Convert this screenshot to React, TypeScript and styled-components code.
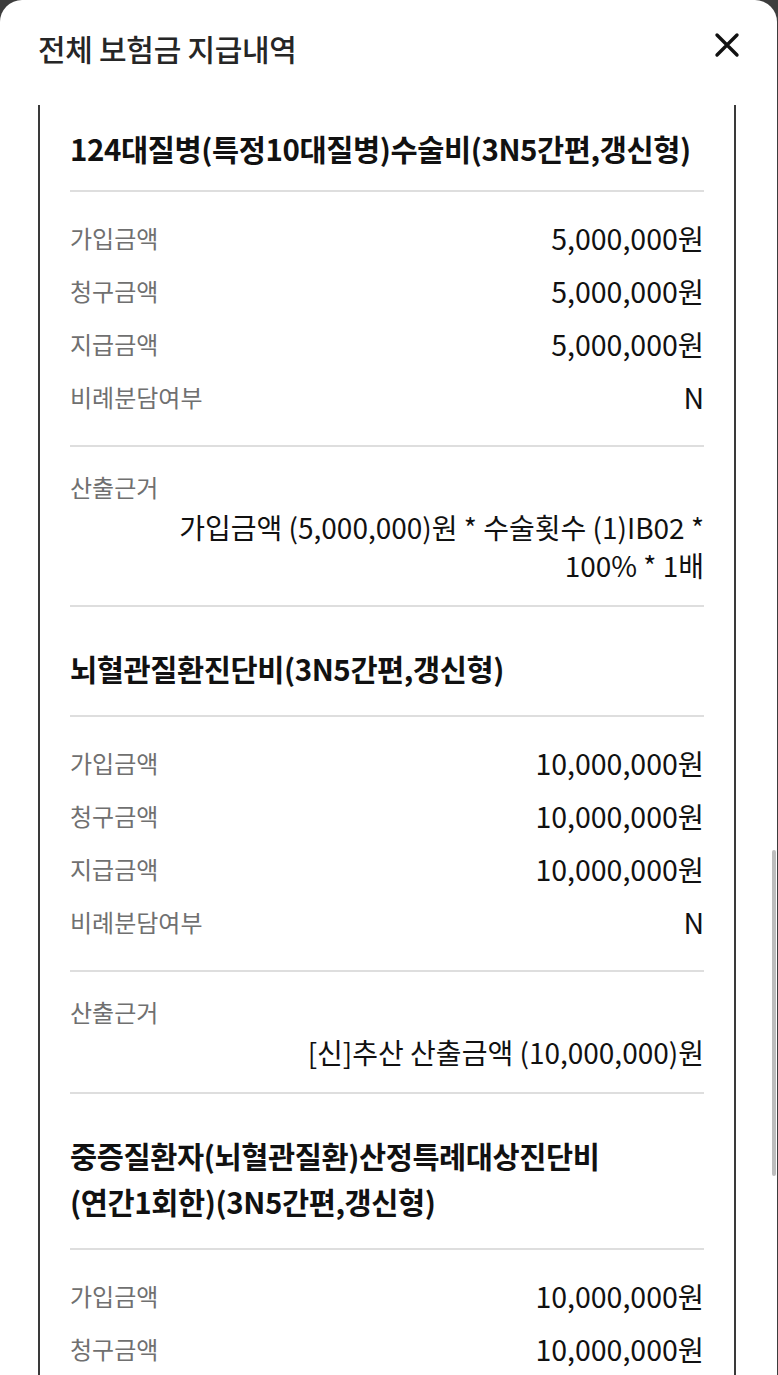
import React, { FC } from "react";
import styled, { createGlobalStyle } from "styled-components";

const GlobalStyle = createGlobalStyle`
  html, body {
    margin: 0;
    padding: 0;
    background: #3d3d3d;
  }
  body {
    font-family: "Noto Sans CJK KR", "Noto Sans", sans-serif;
    -webkit-font-smoothing: antialiased;
  }
`;

const Sheet = styled.div`
  position: relative;
  width: 777px;
  height: 1375px;
  background: #fff;
  border-radius: 22px 22px 0 0;
  overflow: hidden;
  display: flex;
  flex-direction: column;
`;

const Header = styled.header`
  height: 96px;
  margin-bottom: 9px;
  display: flex;
  align-items: center;
  justify-content: space-between;
  padding: 0 36px 0 38px;
  flex-shrink: 0;
`;

const Title = styled.h1`
  margin: 0;
  font-size: 30px;
  font-weight: 500;
  color: #262626;
  letter-spacing: -0.3px;
`;

const CloseButton = styled.button`
  border: 0;
  background: none;
  padding: 0;
  width: 28px;
  height: 28px;
  margin-top: -6px;
  display: flex;
  align-items: center;
  justify-content: center;
  cursor: pointer;
`;

const Box = styled.div`
  flex: 1;
  margin: 0 41px 0 38px;
  border-left: 2px solid #3a3a3a;
  border-right: 2px solid #3a3a3a;
  padding: 0 30px;
  overflow: hidden;
`;

const Section = styled.section``;

const SectionTitle = styled.h2<{ $first?: boolean }>`
  margin: 0;
  padding: ${(p) => (p.$first ? "20px 0 19px" : "38px 0 24px")};
  font-size: 29.5px;
  line-height: 46px;
  font-weight: 700;
  color: #111;
  letter-spacing: -0.4px;
  border-bottom: 2px solid #dedede;
`;

const Rows = styled.div`
  padding: 19px 0 22px;
  border-bottom: 2px solid #dedede;
`;

const Row = styled.div`
  display: flex;
  justify-content: space-between;
  align-items: center;
  height: 53px;
`;

const Label = styled.span`
  font-size: 24px;
  color: #707070;
`;

const Value = styled.span`
  font-size: 28.5px;
  color: #111;
`;

const Basis = styled.div`
  padding: 22px 0 21px;
  border-bottom: 2px solid #dedede;
`;

const BasisLabel = styled.div`
  font-size: 24px;
  line-height: 36px;
  color: #707070;
`;

const BasisText = styled.div`
  margin-top: 3px;
  font-size: 28px;
  line-height: 38px;
  color: #111;
  text-align: right;
`;

const ScrollThumb = styled.div`
  position: absolute;
  right: 1px;
  top: 850px;
  width: 4px;
  height: 326px;
  border-radius: 2px;
  background: #bdbdbd;
`;

type Item = { label: string; value: string };

type Claim = {
  title: React.ReactNode;
  rows: Item[];
  basis?: React.ReactNode;
};

const rowsFor = (amount: string, ratio = "N"): Item[] => [
  { label: "가입금액", value: amount },
  { label: "청구금액", value: amount },
  { label: "지급금액", value: amount },
  { label: "비례분담여부", value: ratio },
];

const claims: Claim[] = [
  {
    title: "124대질병(특정10대질병)수술비(3N5간편,갱신형)",
    rows: rowsFor("5,000,000원"),
    basis: (
      <>
        가입금액 (5,000,000)원 * 수술횟수 (1)IB02 *
        <br />
        100% * 1배
      </>
    ),
  },
  {
    title: "뇌혈관질환진단비(3N5간편,갱신형)",
    rows: rowsFor("10,000,000원"),
    basis: "[신]추산 산출금액 (10,000,000)원",
  },
  {
    title: (
      <>
        중증질환자(뇌혈관질환)산정특례대상진단비
        <br />
        (연간1회한)(3N5간편,갱신형)
      </>
    ),
    rows: rowsFor("10,000,000원"),
    basis: "[신]추산 산출금액 (10,000,000)원",
  },
];

const CloseIcon: FC = () => (
  <svg width="26" height="26" viewBox="0 0 26 26">
    <path d="M3 3 L23 23 M23 3 L3 23" stroke="#111" strokeWidth="3.4" strokeLinecap="round" />
  </svg>
);

const ClaimSection: FC<{ claim: Claim; first?: boolean }> = ({ claim, first }) => (
  <Section>
    <SectionTitle $first={first}>{claim.title}</SectionTitle>
    <Rows>
      {claim.rows.map((r) => (
        <Row key={r.label}>
          <Label>{r.label}</Label>
          <Value>{r.value}</Value>
        </Row>
      ))}
    </Rows>
    {claim.basis && (
      <Basis>
        <BasisLabel>산출근거</BasisLabel>
        <BasisText>{claim.basis}</BasisText>
      </Basis>
    )}
  </Section>
);

const App: FC = () => (
  <>
    <GlobalStyle />
    <Sheet>
      <Header>
        <Title>전체 보험금 지급내역</Title>
        <CloseButton aria-label="닫기">
          <CloseIcon />
        </CloseButton>
      </Header>
      <Box>
        {claims.map((c, i) => (
          <ClaimSection key={i} claim={c} first={i === 0} />
        ))}
      </Box>
      <ScrollThumb />
    </Sheet>
  </>
);

export default App;
